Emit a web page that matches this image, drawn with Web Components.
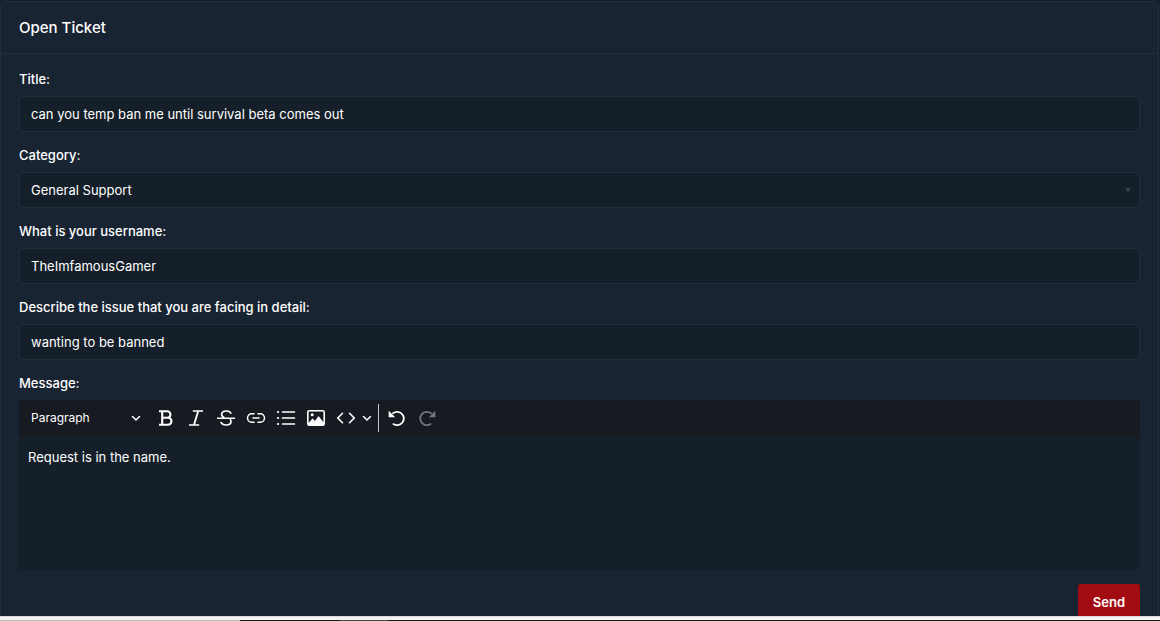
<!DOCTYPE html>
<html lang="en">
<head>
<meta charset="utf-8">
<meta name="viewport" content="width=device-width, initial-scale=1">
<title>Open Ticket</title>
<style>
  html, body {
    height: 100%;
  }

  body {
    margin: 0;
    background: #161f2b;
    color: #fff;
    font-family: Inter, "Liberation Sans", sans-serif;
    font-size: 13px;
    line-height: 18px;
    --card: #192433;
    --field: #151f29;
    --line: #1f2e41;
    --accent: #a30b12;
  }
</style>
</head>
<body>
<ticket-page>
  <ticket-card heading="Open Ticket">
    <text-field label="Title:" value="can you temp ban me until survival beta comes out"></text-field>
    <select-field label="Category:" value="General Support"></select-field>
    <text-field label="What is your username:" value="TheImfamousGamer"></text-field>
    <text-field label="Describe the issue that you are facing in detail:" value="wanting to be banned"></text-field>
    <message-editor label="Message:" value="Request is in the name."></message-editor>
    <send-button slot="footer">Send</send-button>
  </ticket-card>
  <window-edge slot="edge"></window-edge>
</ticket-page>

<script>
const fieldStyle = `
  :host {
    display: flex;
    flex-direction: column;
    gap: 8px;
  }

  label {
    font-weight: 500;
  }

  .control {
    box-sizing: border-box;
    width: 100%;
    height: 36px;
    margin: 0;
    padding: 0 11px;
    border: 1px solid var(--line);
    border-radius: 3px;
    outline: none;
    background: var(--field);
    color: inherit;
    font: inherit;
    appearance: none;
  }
`

customElements.define('ticket-page', class TicketPage extends HTMLElement {
  constructor() {
    super()
    this.attachShadow({mode: 'open'})
    this.shadowRoot.innerHTML = `
    <style>
      :host {
        display: flex;
        flex-direction: column;
        height: 100vh;
      }

      main {
        flex: 1;
        min-height: 0;
        overflow: hidden;
        padding: 1px 1px 0 0;
      }
    </style>
    <main><slot></slot></main>
    <slot name="edge"></slot>
    `
  }
})

customElements.define('ticket-card', class TicketCard extends HTMLElement {
  constructor() {
    super()
    this.attachShadow({mode: 'open'})
    this.shadowRoot.innerHTML = `
    <style>
      :host {
        display: block;
        border: 1px solid var(--line);
        border-radius: 6px;
        background: var(--card);
      }

      header {
        padding: 16px 18px;
        border-bottom: 1px solid var(--line);
      }

      h1 {
        margin: 0;
        font-size: 15px;
        font-weight: 500;
        line-height: 19px;
      }

      form {
        display: flex;
        flex-direction: column;
        gap: 14px;
        padding: 16px 18px;
      }

      footer {
        display: flex;
        justify-content: flex-end;
      }
    </style>
    <header><h1>${this.getAttribute('heading')}</h1></header>
    <form>
      <slot></slot>
      <footer><slot name="footer"></slot></footer>
    </form>
    `
  }
})

customElements.define('text-field', class TextField extends HTMLElement {
  constructor() {
    super()
    this.attachShadow({mode: 'open'})
    this.shadowRoot.innerHTML = `
    <style>${fieldStyle}</style>
    <label for="input">${this.getAttribute('label')}</label>
    <input class="control" id="input" type="text" value="${this.getAttribute('value')}">
    `
  }
})

customElements.define('select-field', class SelectField extends HTMLElement {
  constructor() {
    super()
    this.attachShadow({mode: 'open'})
    this.shadowRoot.innerHTML = `
    <style>
      ${fieldStyle}

      .wrap {
        display: grid;
        align-items: center;
      }

      .wrap > * {
        grid-area: 1 / 1;
      }

      svg {
        justify-self: end;
        margin-right: 9px;
        pointer-events: none;
      }
    </style>
    <label for="select">${this.getAttribute('label')}</label>
    <div class="wrap">
      <select class="control" id="select"><option>${this.getAttribute('value')}</option></select>
      <svg width="6" height="4" viewBox="0 0 6 4" fill="#3b424b"><path d="M0 0h6L4 3.5H2z"/></svg>
    </div>
    `
  }
})

// 20x20 stroke icons, the chevron is 10x10
const icons = {
  chevron: '<path d="m1.500 3.500 3.500 3.500 3.500-3.500" stroke-width="1.500" stroke-linecap="round"/>',
  bold: '<path d="M3 3.300h8.200a3.200 3.200 0 0 1 0 6.500H6M11.200 9.800h.8a3.450 3.450 0 0 1 0 6.900H3M6.200 3.300v13.400" stroke-width="2.100"/>',
  italic: '<path d="M6.800 3H17M3 17h10.200" stroke-width="1.300"/><path d="M12.200 3 8 17" stroke-width="1.900"/>',
  strike: '<path d="M15 5.800C14.500 3.800 12.800 3 10.300 3 7.500 3 5.600 4.200 5.600 6.300c0 1.600 1 2.600 2.800 3.500M4.800 14c.8 2 2.700 3 5.300 3 3 0 4.900-1.300 4.900-3.500 0-1-.3-1.800-1-2.500" stroke-width="1.700"/><path d="M1 10.200h18" stroke-width="1.600"/>',
  link: '<path d="M8 5.700H5.800a4.100 4.100 0 0 0 0 8.600H8M12 5.700h2.200a4.100 4.100 0 0 1 0 8.600H12M7 10h6" stroke-width="1.500" stroke-linecap="round"/>',
  list: '<path d="M6.500 4h12M6.500 10h12M6.500 16h12" stroke-width="1.600" stroke-linecap="round"/><path d="M2 4h.1M2 10h.1M2 16h.1" stroke-width="2.200" stroke-linecap="round"/>',
  image: '<rect x="1.800" y="2.800" width="16.400" height="14.400" rx="1.500" stroke-width="1.600"/><path d="M2 15.500 6.600 10.500l2.400 2.500 3.500-5 5.500 7V17H2z" fill="currentColor"/><circle cx="6.200" cy="6.800" r="1.500" fill="currentColor"/>',
  code: '<path d="M6.500 5.300 1.800 10l4.700 4.700M13.500 5.300l4.700 4.700-4.700 4.700" stroke-width="1.600" stroke-linecap="round"/>',
  turn: '<path d="M6 5.200A6.700 6.700 0 1 1 6.400 16.100" stroke-width="1.800" stroke-linecap="round"/><path d="M1.700 2.800v6.500h6.500z" fill="currentColor"/>'
}

const icon = (name, size = 20) =>
  `<svg width="${size}" height="${size}" viewBox="0 0 ${size} ${size}" fill="none" stroke="currentColor" stroke-width="0" aria-hidden="true">${icons[name]}</svg>`

customElements.define('tool-button', class ToolButton extends HTMLElement {
  constructor() {
    super()
    this.attachShadow({mode: 'open'})
    const name = this.getAttribute('icon')
    const small = name === 'chevron'
    this.shadowRoot.innerHTML = `
    <style>
      :host {
        display: block;
      }

      button {
        display: flex;
        align-items: center;
        justify-content: center;
        width: ${small ? 12 : 30}px;
        height: 30px;
        padding: 0;
        border: 0;
        background: none;
        color: #fff;
      }

      button:disabled {
        color: #75767b;
      }

      :host([flip]) svg {
        transform: scaleX(-1);
      }
    </style>
    <button type="button" aria-label="${this.getAttribute('label')}" ${this.hasAttribute('disabled') ? 'disabled' : ''}>
      ${icon(name, small ? 10 : 20)}
    </button>
    `
  }
})

customElements.define('message-editor', class MessageEditor extends HTMLElement {
  constructor() {
    super()
    this.attachShadow({mode: 'open'})
    this.shadowRoot.innerHTML = `
    <style>
      ${fieldStyle}

      .editor {
        display: flex;
        flex-direction: column;
        border-radius: 3px;
        overflow: hidden;
        background: var(--field);
      }

      .toolbar {
        display: flex;
        align-items: center;
        height: 36px;
        padding: 0 4px;
        background: #181a21;
      }

      .heading {
        display: grid;
        align-items: center;
        width: 128px;
      }

      .heading > * {
        grid-area: 1 / 1;
      }

      .heading select {
        width: 100%;
        height: 30px;
        padding: 0 8px;
        border: 0;
        outline: none;
        background: none;
        color: inherit;
        font: inherit;
        font-size: 12px;
        appearance: none;
      }

      .heading svg {
        justify-self: end;
        margin-right: 10px;
        pointer-events: none;
      }

      .group {
        display: flex;
        align-items: center;
      }

      .separator {
        width: 1px;
        height: 28px;
        margin: 0 3px 0 5px;
        background: #c4c4c4;
      }

      textarea {
        box-sizing: border-box;
        width: 100%;
        height: 134px;
        margin: 0;
        padding: 12px 9px;
        border: 0;
        outline: none;
        resize: none;
        background: none;
        color: inherit;
        font: inherit;
      }
    </style>
    <label for="message">${this.getAttribute('label')}</label>
    <div class="editor">
      <div class="toolbar">
        <div class="heading">
          <select aria-label="Heading"><option>Paragraph</option></select>
          ${icon('chevron', 10)}
        </div>
        <div class="group">
          <tool-button icon="bold" label="Bold"></tool-button>
          <tool-button icon="italic" label="Italic"></tool-button>
          <tool-button icon="strike" label="Strikethrough"></tool-button>
          <tool-button icon="link" label="Link"></tool-button>
          <tool-button icon="list" label="Bulleted List"></tool-button>
          <tool-button icon="image" label="Insert image"></tool-button>
          <tool-button icon="code" label="Insert code block"></tool-button>
          <tool-button icon="chevron" label="Code languages"></tool-button>
        </div>
        <span class="separator"></span>
        <div class="group">
          <tool-button icon="turn" label="Undo"></tool-button>
          <tool-button icon="turn" label="Redo" flip disabled></tool-button>
        </div>
      </div>
      <textarea id="message">${this.getAttribute('value')}</textarea>
    </div>
    `
  }
})

customElements.define('send-button', class SendButton extends HTMLElement {
  constructor() {
    super()
    this.attachShadow({mode: 'open'})
    this.shadowRoot.innerHTML = `
    <style>
      :host {
        display: block;
      }

      button {
        height: 36px;
        padding: 0 15px;
        border: 0;
        border-radius: 3px;
        background: var(--accent);
        color: #fff;
        font: inherit;
        font-weight: 600;
      }
    </style>
    <button type="button"><slot></slot></button>
    `
  }
})

// light strip with a thin two-tone line under it
customElements.define('window-edge', class WindowEdge extends HTMLElement {
  constructor() {
    super()
    this.attachShadow({mode: 'open'})
    this.shadowRoot.innerHTML = `
    <style>
      :host {
        display: block;
        flex: none;
      }

      .strip {
        height: 3px;
        border-top: 1px solid #d8d8d6;
        background: #f5f4f1;
      }

      .line {
        height: 1px;
        background: linear-gradient(90deg, #bbb 240px, #1b1b1b 240px 340px, #484848 340px 388px, #1b1b1b 388px);
      }
    </style>
    <div class="strip"></div>
    <div class="line"></div>
    `
  }
})
</script>
</body>
</html>
